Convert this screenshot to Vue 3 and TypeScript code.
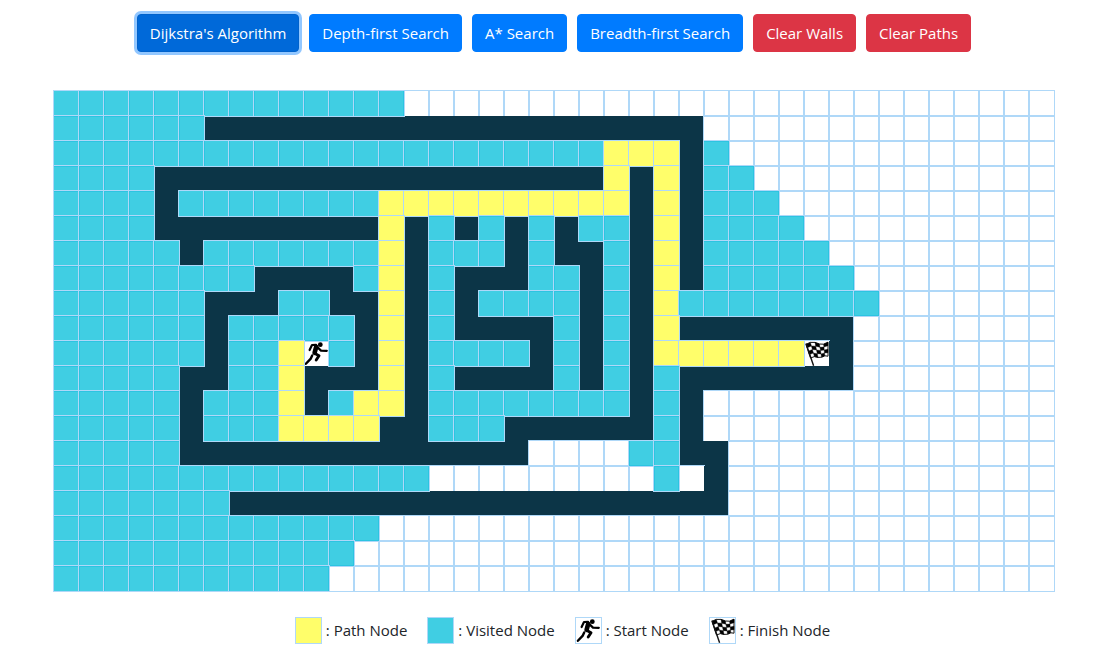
<script setup lang="ts">
import { computed, ref } from 'vue'

type CellKind = 'empty' | 'wall' | 'visited' | 'path' | 'start' | 'finish'
type Run = [kind: string, count: number]
interface Action {
  label: string
  danger: boolean
}

const COLUMNS = 40

const actions: Action[] = [
  { label: "Dijkstra's Algorithm", danger: false },
  { label: 'Depth-first Search', danger: false },
  { label: 'A* Search', danger: false },
  { label: 'Breadth-first Search', danger: false },
  { label: 'Clear Walls', danger: true },
  { label: 'Clear Paths', danger: true },
]
const selected = ref(actions[0].label)

const legend: { kind: CellKind; label: string }[] = [
  { kind: 'path', label: 'Path Node' },
  { kind: 'visited', label: 'Visited Node' },
  { kind: 'start', label: 'Start Node' },
  { kind: 'finish', label: 'Finish Node' },
]

// Run-length rows: v visited, w wall, p path, s start, f finish, e empty.
// Whatever is missing at the end of a row is empty.
const rows = ref<string[]>([
  'v14',
  'v6 w20',
  'v22 p3 w1 v1',
  'v4 w18 p1 w1 p1 w1 v2',
  'v4 w1 v8 p10 w1 p1 w1 v3',
  'v4 w9 p1 w1 v1 w1 v1 w1 v1 w1 v2 w1 p1 w1 v4',
  'v5 w1 v7 p1 w1 v3 w1 v1 w2 v1 w1 p1 w1 v5',
  'v8 w4 v1 p1 w1 v1 w3 v2 w1 v1 w1 p1 w1 v6',
  'v6 w3 v2 w2 p1 w1 v1 w1 v4 w1 v1 w1 p1 v8',
  'v6 w1 v5 w1 p1 w1 v1 w4 v1 w1 v1 w1 p1 w7',
  'v6 w1 v2 p1 s1 v1 w1 p1 w1 v4 w1 v1 w1 v1 w1 p6 f1 w1',
  'v5 w2 v2 p1 w3 p1 w1 v1 w4 v1 w1 v1 w1 v1 w7',
  'v5 w1 v3 p1 w1 v1 p2 w1 v8 w1 v1 w1',
  'v5 w1 v3 p4 w2 v3 w6 v1 w1',
  'v5 w14 e4 v2 w2',
  'v15 e9 v1 e1 w1',
  'v7 w20',
  'v13',
  'v12',
  'v11',
])

const kinds: Record<string, CellKind> = {
  v: 'visited', w: 'wall', p: 'path', s: 'start', f: 'finish', e: 'empty',
}

const cells = computed<CellKind[]>(() =>
  rows.value.flatMap((row) => {
    const runs = row.split(' ').map((r): Run => [r[0], Number(r.slice(1))])
    const line = runs.flatMap(([k, n]) => Array<CellKind>(n).fill(kinds[k]))
    return line.concat(Array<CellKind>(COLUMNS - line.length).fill('empty'))
  }),
)

// Upper and lower edge of the waving flag, split into five columns.
const top = [[2, 3.4], [6.4, 1.4], [11, 1.4], [15.4, 3], [19.6, 3.2], [24, 1.2]]
const bottom = [[6.5, 17], [10.4, 15.6], [14, 16.4], [17.6, 16.2], [20.8, 14.8], [24, 15.2]]
const FLAG_ROWS = 4
function flagPoint(col: number, row: number): string {
  const t = row / FLAG_ROWS
  const x = top[col][0] + (bottom[col][0] - top[col][0]) * t
  const y = top[col][1] + (bottom[col][1] - top[col][1]) * t
  return `${x.toFixed(2)},${y.toFixed(2)}`
}
const flagSquares: string[] = []
for (let r = 0; r < FLAG_ROWS; r++) {
  for (let c = 0; c < 5; c++) {
    if ((r + c) % 2 === 0) {
      flagSquares.push([flagPoint(c, r), flagPoint(c + 1, r), flagPoint(c + 1, r + 1), flagPoint(c, r + 1)].join(' '))
    }
  }
}
const flagEdge = [...top, ...[...bottom].reverse()].map((p) => p.join(',')).join(' ')
</script>

<template>
  <main class="page">
    <svg class="defs" aria-hidden="true">
      <symbol id="runner" viewBox="0 0 25 25">
        <circle cx="16.3" cy="3.7" r="2.4" />
        <g fill="none" stroke="#000" stroke-linecap="round" stroke-linejoin="round">
          <path d="M5.6 9 L8 4 L12 3.8" stroke-width="2.2" />
          <path d="M12.2 5.8 L10.6 11.8" stroke-width="4.6" />
          <path d="M13.6 6.4 L17 9.6 L22.8 9.8" stroke-width="2.2" />
          <path d="M11 12.6 L15 14.8 L12.2 19" stroke-width="2.9" />
          <path d="M8.2 14.4 L6.8 17.6 L1.9 22.8" stroke-width="2.4" />
        </g>
      </symbol>
      <symbol id="flag" viewBox="0 0 25 25">
        <polygon :points="flagEdge" fill="#fff" stroke="#111" stroke-width="1" />
        <polygon v-for="(square, i) in flagSquares" :key="i" :points="square" stroke="#000" stroke-width="0.4" />
        <path d="M2 2.6 L9.6 24.8" stroke="#111" stroke-width="1.4" fill="none" />
      </symbol>
    </svg>

    <div class="toolbar">
      <button
        v-for="action in actions"
        :key="action.label"
        type="button"
        class="btn"
        :class="{ danger: action.danger, active: selected === action.label }"
        @click="selected = action.label"
      >{{ action.label }}</button>
    </div>

    <div class="board">
      <div v-for="(kind, i) in cells" :key="i" class="cell" :class="kind">
        <svg v-if="kind === 'start'" class="icon"><use href="#runner" /></svg>
        <svg v-else-if="kind === 'finish'" class="icon"><use href="#flag" /></svg>
      </div>
    </div>

    <ul class="legend">
      <li v-for="item in legend" :key="item.kind" class="entry">
        <span class="cell" :class="item.kind">
          <svg v-if="item.kind === 'start'" class="icon"><use href="#runner" /></svg>
          <svg v-else-if="item.kind === 'finish'" class="icon"><use href="#flag" /></svg>
        </span>
        <span>: {{ item.label }}</span>
      </li>
    </ul>
  </main>
</template>

<style>
body {
  background: #fff;
}
</style>

<style scoped>
.page {
  box-sizing: border-box;
  display: flex;
  flex-direction: column;
  align-items: center;
  padding: 14px 0 24px 7px;
  font-family: "Segoe UI", "Open Sans", "Noto Sans", sans-serif;
  font-size: 15px;
  line-height: 24px;
  color: #212529;
}
.defs {
  display: none;
}
.toolbar {
  display: flex;
  flex-wrap: wrap;
  justify-content: center;
  gap: 10px;
}
.btn {
  padding: 6px 12px;
  border: 1px solid #007bff;
  border-radius: 4px;
  background: #007bff;
  color: #fff;
  font: inherit;
  cursor: pointer;
}
.btn.danger {
  border-color: #dc3545;
  background: #dc3545;
}
.btn.active {
  border-color: #0062cc;
  background: #0069d9;
  box-shadow: 0 0 0 3px rgba(38, 143, 255, 0.5);
}
.board {
  display: grid;
  grid-template-columns: repeat(40, 25px);
  grid-auto-rows: 25px;
  margin-top: 39px;
}
.cell {
  width: 25px;
  height: 25px;
  outline: 1px solid #afd8f8;
}
.wall {
  background: #0c3547;
  outline: none;
}
.visited {
  z-index: 1;
  background: rgba(0, 190, 218, 0.75);
}
.path {
  z-index: 1;
  background: #fffe6a;
}
.start,
.finish {
  background: #fff;
}
.icon {
  display: block;
  width: 25px;
  height: 25px;
}
.legend {
  display: flex;
  flex-wrap: wrap;
  gap: 21px;
  margin: 27px 0 0;
  padding: 0 0 0 18px;
  list-style: none;
}
.entry {
  display: flex;
  align-items: flex-start;
  gap: 5px;
}
</style>
